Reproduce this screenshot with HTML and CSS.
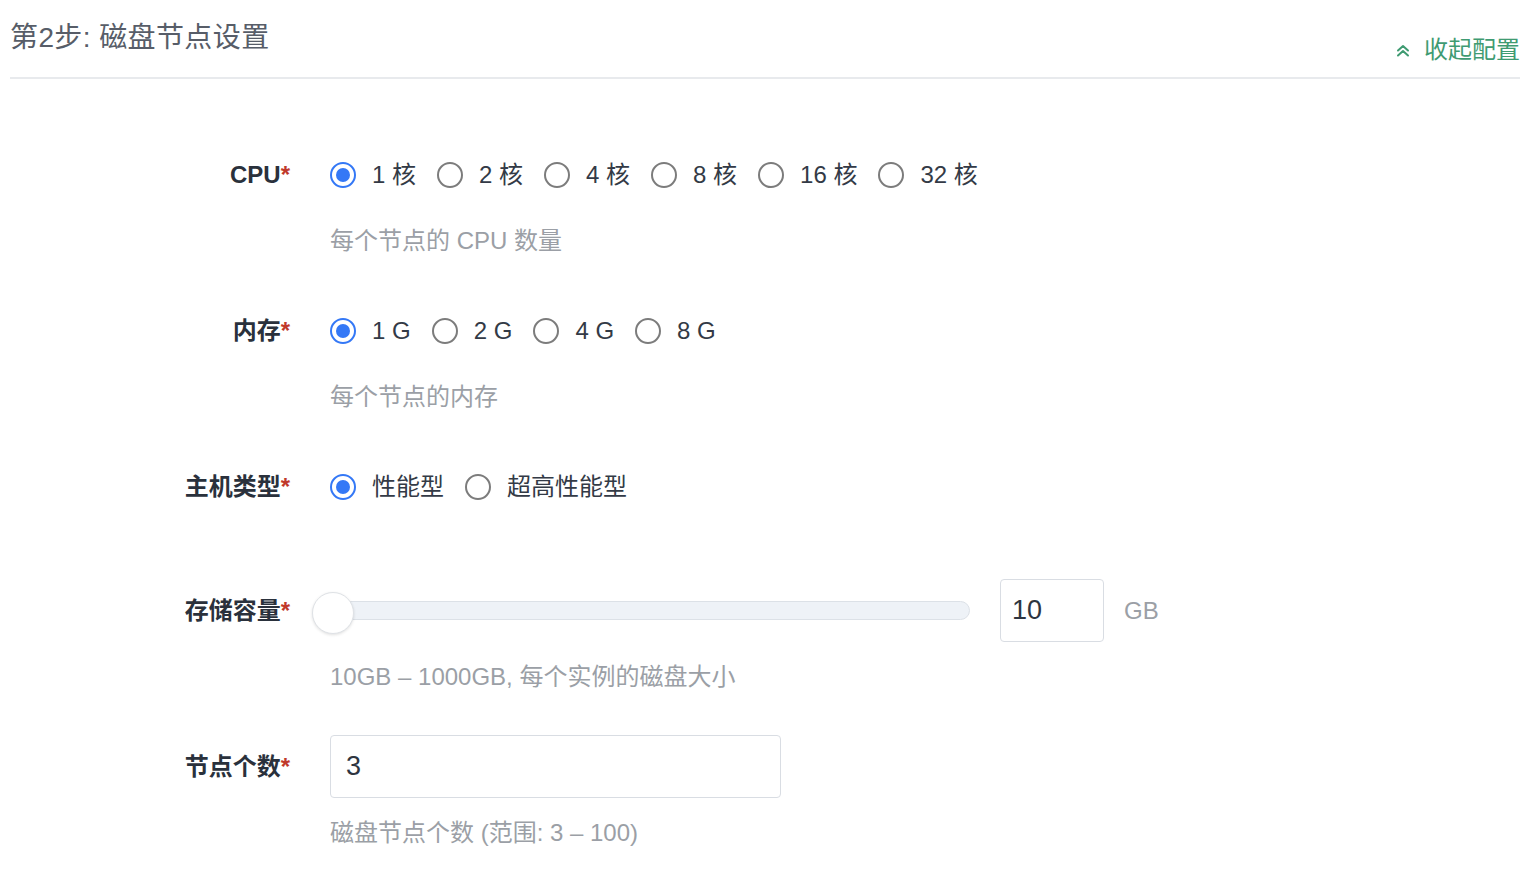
FILE: index.html
```html
<!DOCTYPE html>
<html lang="zh-CN">
<head>
<meta charset="utf-8">
<title>磁盘节点设置</title>
<link rel="stylesheet" href="styles.css">
</head>
<body>
<div class="header">
  <div class="title">第2步: 磁盘节点设置</div>
  <div class="toggle">
    <svg class="chev" width="14" height="13" viewBox="0 0 14 13"><path d="M2 6.5 L7 2 L12 6.5 M2 11.5 L7 7 L12 11.5" fill="none" stroke="#3f9b72" stroke-width="2" stroke-linecap="round" stroke-linejoin="round"/></svg>
    <span>收起配置</span>
  </div>
</div>

<div class="form">
  <div class="field f-help">
    <div class="label">CPU<span class="req">*</span></div>
    <div class="control">
      <div class="radios">
        <label class="radio checked"><span class="dot"></span><span class="txt">1 核</span></label>
        <label class="radio"><span class="dot"></span><span class="txt">2 核</span></label>
        <label class="radio"><span class="dot"></span><span class="txt">4 核</span></label>
        <label class="radio"><span class="dot"></span><span class="txt">8 核</span></label>
        <label class="radio"><span class="dot"></span><span class="txt">16 核</span></label>
        <label class="radio"><span class="dot"></span><span class="txt">32 核</span></label>
      </div>
    </div>
    <div class="help">每个节点的 CPU 数量</div>
  </div>

  <div class="field f-help">
    <div class="label">内存<span class="req">*</span></div>
    <div class="control">
      <div class="radios">
        <label class="radio checked"><span class="dot"></span><span class="txt">1 G</span></label>
        <label class="radio"><span class="dot"></span><span class="txt">2 G</span></label>
        <label class="radio"><span class="dot"></span><span class="txt">4 G</span></label>
        <label class="radio"><span class="dot"></span><span class="txt">8 G</span></label>
      </div>
    </div>
    <div class="help">每个节点的内存</div>
  </div>

  <div class="field f-host">
    <div class="label">主机类型<span class="req">*</span></div>
    <div class="control">
      <div class="radios">
        <label class="radio checked"><span class="dot"></span><span class="txt">性能型</span></label>
        <label class="radio"><span class="dot"></span><span class="txt">超高性能型</span></label>
      </div>
    </div>
  </div>

  <div class="field f-storage">
    <div class="label">存储容量<span class="req">*</span></div>
    <div class="control slider-row">
      <div class="slider">
        <div class="track"></div>
        <div class="thumb"></div>
      </div>
      <div class="input small">10</div>
      <div class="unit">GB</div>
    </div>
    <div class="help near">10GB – 1000GB, 每个实例的磁盘大小</div>
  </div>

  <div class="field">
    <div class="label">节点个数<span class="req">*</span></div>
    <div class="control">
      <div class="input wide">3</div>
    </div>
    <div class="help near">磁盘节点个数 (范围: 3 – 100)</div>
  </div>
</div>
</body>
</html>
```

FILE: styles.css
```css
* { box-sizing: border-box; }
body {
  margin: 0;
  background: #fff;
  font-family: "Liberation Sans", "Noto Sans CJK SC", sans-serif;
  color: #333a46;
}
.header {
  margin: 0 10px;
  height: 79px;
  border-bottom: 2px solid #e8eaed;
  display: flex;
  justify-content: space-between;
  align-items: flex-start;
}
.title {
  margin-top: 18px;
  font-size: 28px;
  letter-spacing: 0.4px;
  line-height: 40px;
  color: #575d68;
}
.toggle {
  margin-top: 32px;
  display: flex;
  align-items: center;
  gap: 14px;
  font-size: 24px;
  line-height: 36px;
  color: #3f9b72;
}
.form {
  padding-top: 74px;
}
.field {
  display: grid;
  grid-template-columns: 290px 1fr;
  column-gap: 40px;
  align-items: center;
  margin-bottom: 50px;
}
.field.f-host { margin-bottom: 70px; }
.field.f-storage { margin-bottom: 40px; }
.label {
  text-align: right;
  font-size: 24px;
  font-weight: bold;
  color: #2a313c;
  line-height: 36px;
}
.req { color: #c0392b; font-weight: bold; }
.control { min-height: 44px; display: flex; align-items: center; }
.help {
  grid-column: 2;
  margin-top: 26px;
  font-size: 24px;
  line-height: 36px;
  color: #9b9fa6;
}
.help.near { margin-top: 17px; }
.radios { display: flex; align-items: center; }
.radio {
  display: flex;
  align-items: center;
  margin-right: 21px;
  font-size: 24px;
  line-height: 36px;
  color: #333a46;
}
.dot {
  width: 26px;
  height: 26px;
  border-radius: 50%;
  border: 2px solid #7c7c7c;
  margin-right: 16px;
  display: flex;
  align-items: center;
  justify-content: center;
  flex: none;
}
.radio.checked .dot { border: 2.5px solid #3478f6; }
.radio.checked .dot::after {
  content: "";
  width: 14px;
  height: 14px;
  border-radius: 50%;
  background: #3478f6;
}
.slider-row { height: 63px; }
.slider {
  position: relative;
  width: 640px;
  height: 42px;
  display: flex;
  align-items: center;
}
.track {
  width: 100%;
  height: 19px;
  border-radius: 10px;
  background: #eef2f7;
  border: 1px solid #dce1e7;
}
.thumb {
  position: absolute;
  left: -18px;
  top: 2px;
  width: 42px;
  height: 42px;
  border-radius: 50%;
  background: #fff;
  border: 1px solid #dfe2e6;
  box-shadow: 0 1px 3px rgba(0,0,0,0.12);
}
.input {
  height: 63px;
  border: 1.5px solid #d9dde3;
  border-radius: 4px;
  font-size: 27px;
  line-height: 60px;
  color: #2e3540;
  padding-left: 11px;
}
.input.small { width: 104px; margin-left: 30px; }
.input.wide { width: 451px; padding-left: 15px; }
.unit {
  margin-left: 20px;
  font-size: 24px;
  color: #9b9fa6;
}
```
